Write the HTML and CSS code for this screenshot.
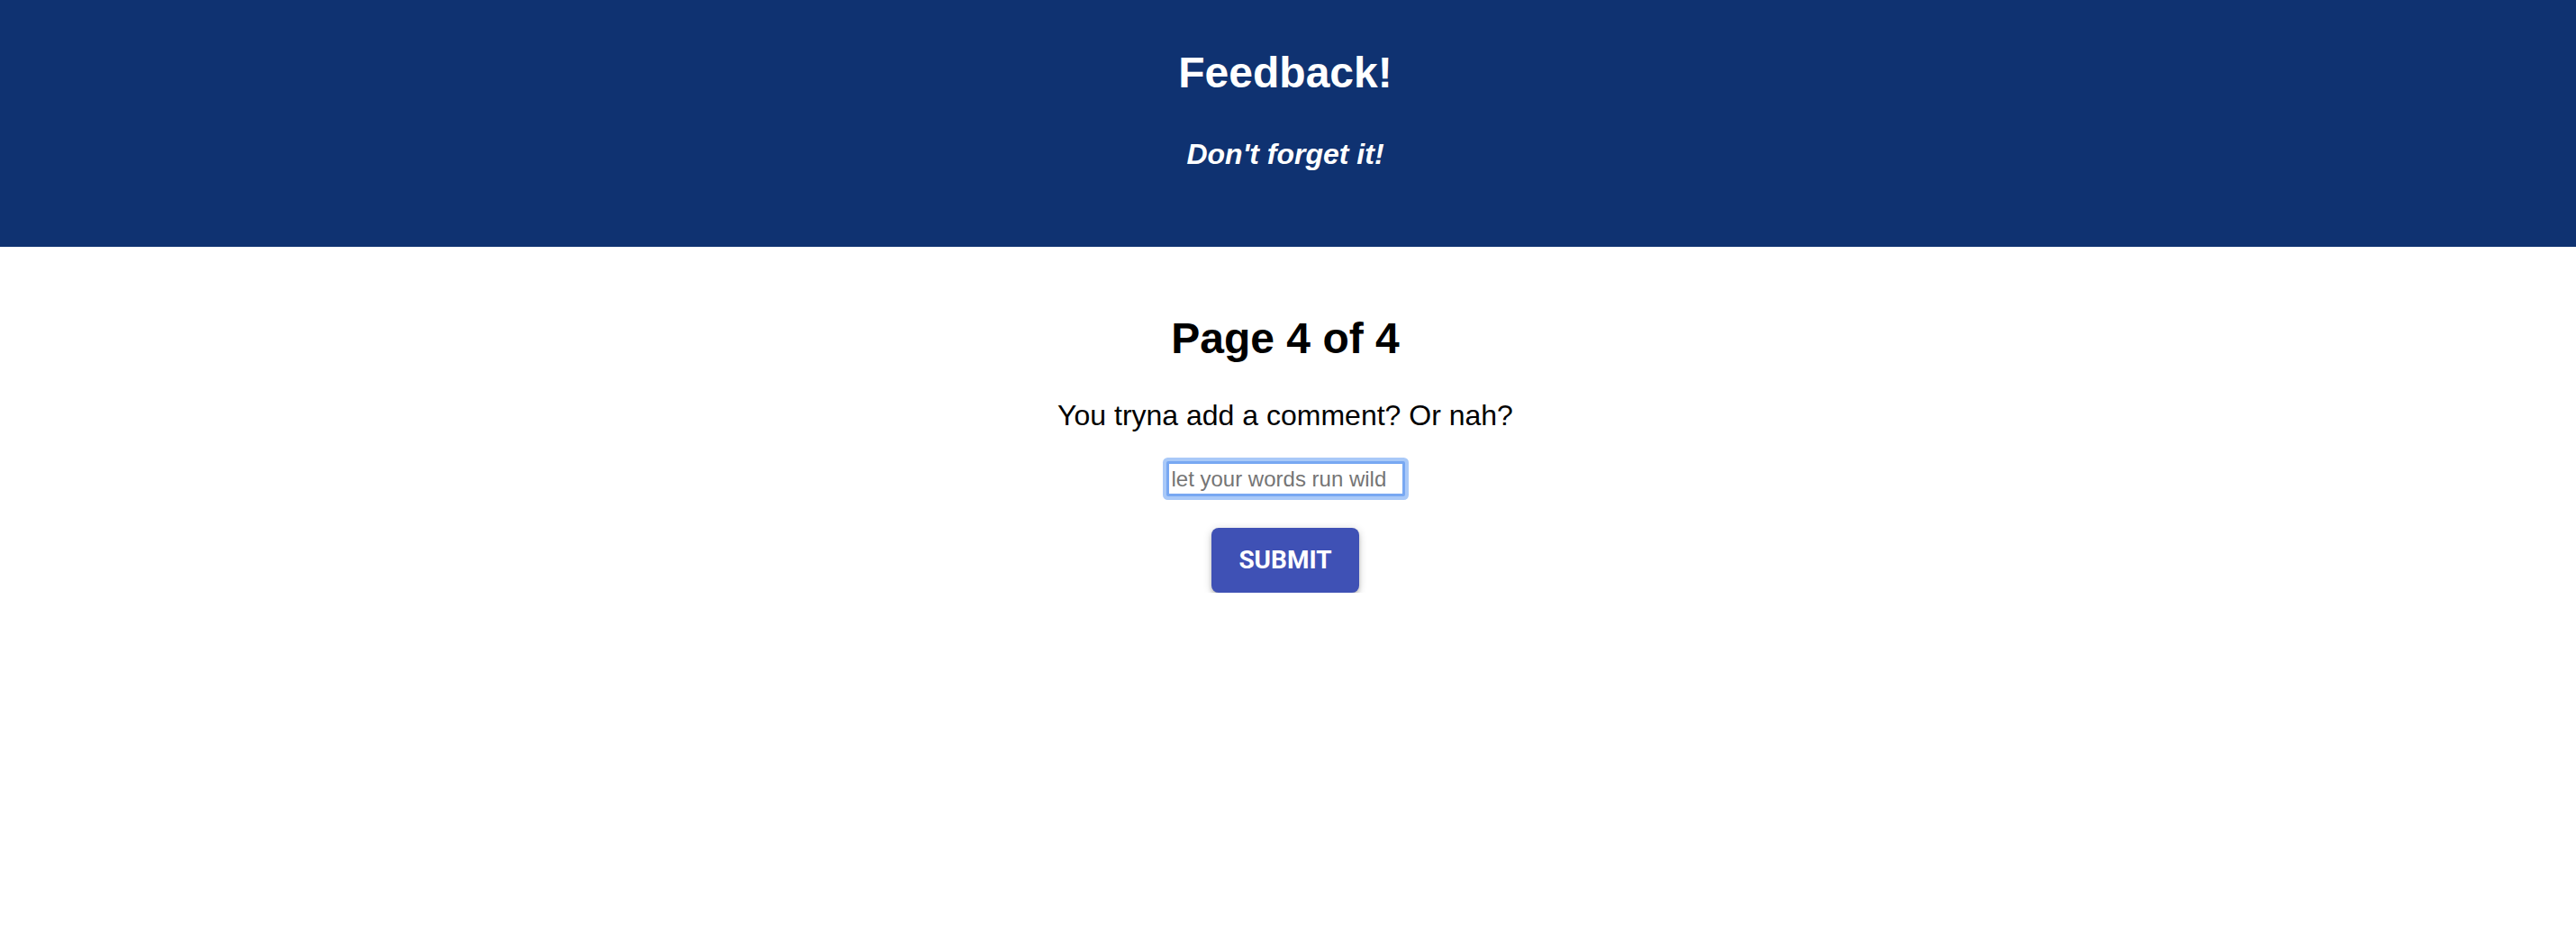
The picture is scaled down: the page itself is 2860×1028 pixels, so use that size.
FILE: index.html
```html
<!DOCTYPE html>
<html lang="en">
<head>
<meta charset="utf-8">
<title>Feedback!</title>
<link rel="stylesheet" href="styles.css">
</head>
<body>
<header class="hero">
  <h2 class="hero-title">Feedback!</h2>
  <h4 class="hero-sub">Don't forget it!</h4>
</header>
<main class="content">
  <h2 class="page-title">Page 4 of 4</h2>
  <p class="question">You tryna add a comment? Or nah?</p>
  <input class="comment" type="text" placeholder="let your words run wild">
  <button class="submit" type="button">Submit</button>
</main>
</body>
</html>
```

FILE: styles.css
```css
html, body {
  margin: 0;
  padding: 0;
  background: #ffffff;
  font-family: "Liberation Sans", Arial, Helvetica, sans-serif;
}

.hero {
  background: #0f3271;
  color: #ffffff;
  height: 274px;
  box-sizing: border-box;
  padding: 57px 6px 0 0;
  display: flex;
  flex-direction: column;
  align-items: center;
}

.hero-title {
  margin: 0;
  font-size: 48px;
  line-height: 48px;
  font-weight: bold;
}

.hero-sub {
  margin: 50px 0 0;
  font-size: 32px;
  line-height: 32px;
  font-weight: bold;
  font-style: italic;
}

.content {
  display: flex;
  flex-direction: column;
  align-items: center;
  padding: 78px 6px 0 0;
}

.page-title {
  margin: 0;
  font-size: 48px;
  line-height: 48px;
  font-weight: bold;
  color: #000000;
}

.question {
  margin: 45px 0 0;
  font-size: 32px;
  line-height: 32px;
  color: #000000;
}

.comment {
  margin: 35px 0 0;
  width: 265px;
  height: 39px;
  box-sizing: border-box;
  border: 3px solid #78a8f2;
  border-radius: 2px;
  box-shadow: 0 0 0 4px #a9c9f8;
  outline: none;
  padding: 0 3px;
  font-family: "Liberation Sans", Arial, Helvetica, sans-serif;
  font-size: 24px;
  color: #333333;
  background: #ffffff;
}

.comment::placeholder {
  color: #757575;
}

.submit {
  margin: 35px 0 0;
  min-width: 128px;
  min-height: 72px;
  padding: 16px 30px;
  box-sizing: border-box;
  border: none;
  border-radius: 8px;
  background: #3f51b5;
  color: #ffffff;
  font-family: Roboto, "Liberation Sans", sans-serif;
  font-weight: 700;
  font-size: 28px;
  line-height: 40px;
  text-transform: uppercase;
  box-shadow: 0 2px 10px 0 rgba(0,0,0,0.2), 0 4px 4px 0 rgba(0,0,0,0.14), 0 6px 2px -4px rgba(0,0,0,0.12);
  cursor: pointer;
}
```
